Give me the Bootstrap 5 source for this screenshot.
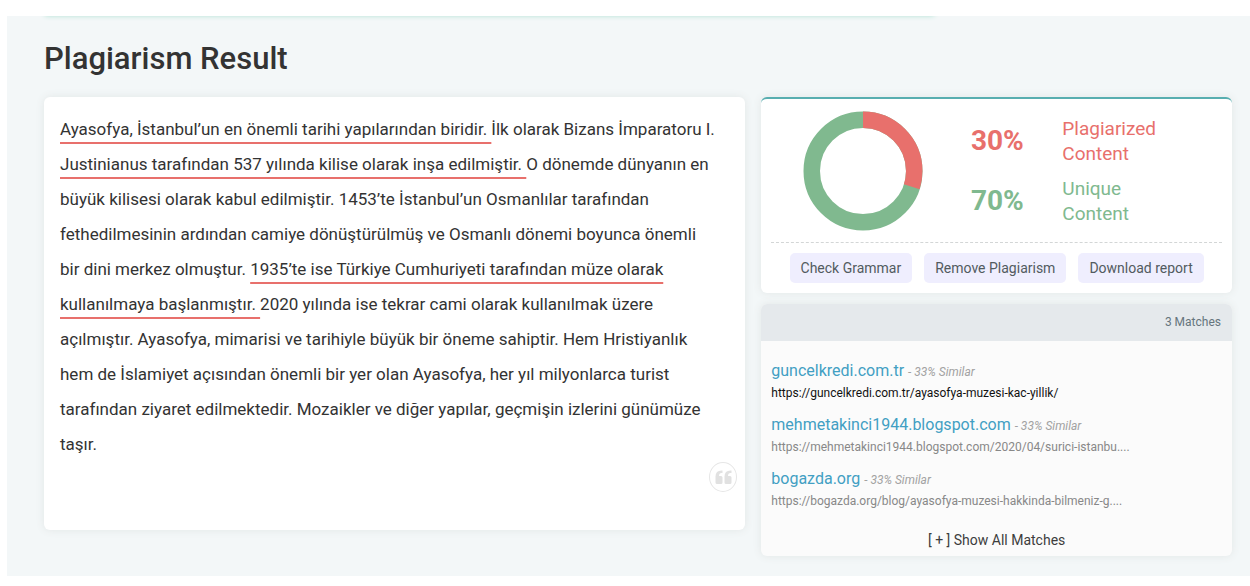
<!DOCTYPE html>
<html lang="en">
<head>
<meta charset="utf-8">
<meta name="viewport" content="width=device-width, initial-scale=1">
<title>Plagiarism Result</title>
<link href="https://cdn.jsdelivr.net/npm/bootstrap@5.3.0/dist/css/bootstrap.min.css" rel="stylesheet">
<style>
body{font-family:Roboto,"Liberation Sans",sans-serif;color:#333;background:#fff}
.page-panel{background:#f3f7f8;margin:16px 0 10px 7px;padding:0 18px 20px 37px;overflow:hidden}
.panel-edge{height:8px;margin:-9px 25% 0 0;border-radius:6px;box-shadow:0 1px 5px #b4e3d5}
.result-title{font-size:31px;line-height:36px;font-weight:500;margin:26px 0 20px}
.result-grid{display:grid;grid-template-columns:minmax(0,1fr);gap:16px;align-items:start}
@media(min-width:992px){.result-grid{grid-template-columns:minmax(0,1.49fr) minmax(0,1fr)}}
.soft-card{background:#fff;border-radius:6px;box-shadow:0 0 8px #e2e6e6}
.essay-card{padding:15px 8px 38px 16px}
.essay{font-size:17px;line-height:35px;margin:0;padding-right:20px}
.hit{text-decoration:underline;text-decoration-color:#e8706c;text-decoration-thickness:2px;text-underline-offset:7px;text-decoration-skip-ink:none}
.quote-btn{width:28px;height:30px;border:1px solid #e6e6e6;border-radius:50%;background:#fff}
.score-card{border-top:2px solid #58aeb0;padding:12px 10px 10px}
.chart-cell{width:184px}
.score-row{height:60px}
.score-pct{font-size:28px;font-weight:700;width:84px;margin-right:23px;line-height:36px}
.score-label{font-size:19px;line-height:25px;width:100px}
.c-red{color:#e8706c}.c-green{color:#80b98f}
.score-actions{border-top:1px dashed #d3d6d6;margin-top:11px;padding-top:10px;gap:12px}
.act-btn{background:#efeefe;color:#525b60;border:0;border-radius:5px;font-size:14px;line-height:20px;padding:5px 11px}
.act-btn:hover{background:#e2e0fb}
.matches-card{background:#fbfbfb;overflow:hidden;margin-top:11px}
.matches-head{background:#e5e9ec;color:#66757d;font-size:12px;line-height:37px;padding:0 11px}
.matches-body{padding:18px 10px 0}
.match-item{margin-bottom:10px}
.match-site{color:#429fc3;font-size:16px;line-height:24px;text-decoration:none}
.match-sim{color:#a2a2a2;font-size:12px}
.match-url{font-size:12px;line-height:20px;color:#888;text-decoration:none}
.match-url.current{color:#111}
.show-all{border:0;background:none;color:#3d3d3d;font-size:14px;line-height:20px;padding:0;margin:9px 0 6px}
</style>
</head>
<body>
<main class="page-panel">
  <div class="panel-edge"></div>
  <h1 class="result-title">Plagiarism Result</h1>
  <div class="result-grid">
    <section class="soft-card essay-card">
      <p class="essay"><span class="hit">Ayasofya, İstanbul’un en önemli tarihi yapılarından biridir. </span>İlk olarak Bizans İmparatoru I. <span class="hit">Justinianus tarafından 537 yılında kilise olarak inşa edilmiştir. </span>O dönemde dünyanın en büyük kilisesi olarak kabul edilmiştir. 1453’te İstanbul’un Osmanlılar tarafından fethedilmesinin ardından camiye dönüştürülmüş ve Osmanlı dönemi boyunca önemli bir dini merkez olmuştur. <span class="hit">1935’te ise Türkiye Cumhuriyeti tarafından müze olarak kullanılmaya başlanmıştır. </span>2020 yılında ise tekrar cami olarak kullanılmak üzere açılmıştır. Ayasofya, mimarisi ve tarihiyle büyük bir öneme sahiptir. Hem Hristiyanlık hem de İslamiyet açısından önemli bir yer olan Ayasofya, her yıl milyonlarca turist tarafından ziyaret edilmektedir. Mozaikler ve diğer yapılar, geçmişin izlerini günümüze taşır.</p>
      <div class="d-flex justify-content-end">
        <button class="quote-btn d-flex align-items-center justify-content-center p-0" type="button" aria-label="Cite">
          <svg width="17" height="15" viewBox="0 0 17 15" fill="#e1e1e1"><path id="q" d="M7.5 0.5V3H6.5Q4 3 4 6H6Q7.500 6 7.500 7.500V12.500Q7.500 14 6 14H2Q.5 14 .5 12.500V6.500Q.5.5 6.500.5Z"/><use href="#q" x="9"/></svg>
        </button>
      </div>
    </section>
    <div>
      <section class="soft-card score-card">
        <div class="d-flex align-items-center">
          <div class="chart-cell text-center">
            <svg class="d-block mx-auto" width="120" height="120" viewBox="0 0 120 120" fill="none" stroke-width="16.500" role="img" aria-label="30% plagiarized, 70% unique">
              <circle cx="60" cy="60" r="51.250" stroke="#80b98f"/>
              <circle cx="60" cy="60" r="51.250" stroke="#e8706c" pathLength="100" stroke-dasharray="30 70" transform="rotate(-90 60 60)"/>
            </svg>
          </div>
          <div class="d-flex flex-column">
            <div class="score-row d-flex align-items-center c-red"><div class="score-pct text-center">30%</div><div class="score-label">Plagiarized Content</div></div>
            <div class="score-row d-flex align-items-center c-green"><div class="score-pct text-center">70%</div><div class="score-label">Unique Content</div></div>
          </div>
        </div>
        <div class="score-actions d-flex flex-wrap justify-content-center">
          <button class="act-btn" type="button">Check Grammar</button>
          <button class="act-btn" type="button">Remove Plagiarism</button>
          <button class="act-btn" type="button">Download report</button>
        </div>
      </section>
      <section class="soft-card matches-card">
        <div class="matches-head text-end">3 Matches</div>
        <div class="matches-body">
          <div class="match-item"><div><a class="match-site" href="#">guncelkredi.com.tr</a> <em class="match-sim">- 33% Similar</em></div><a class="match-url current d-block" href="#">https://guncelkredi.com.tr/ayasofya-muzesi-kac-yillik/</a></div>
          <div class="match-item"><div><a class="match-site" href="#">mehmetakinci1944.blogspot.com</a> <em class="match-sim">- 33% Similar</em></div><a class="match-url d-block" href="#">https://mehmetakinci1944.blogspot.com/2020/04/surici-istanbu....</a></div>
          <div class="match-item"><div><a class="match-site" href="#">bogazda.org</a> <em class="match-sim">- 33% Similar</em></div><a class="match-url d-block" href="#">https://bogazda.org/blog/ayasofya-muzesi-hakkinda-bilmeniz-g....</a></div>
          <div class="text-center"><button class="show-all" type="button">[ + ] Show All Matches</button></div>
        </div>
      </section>
    </div>
  </div>
</main>
<script src="https://cdn.jsdelivr.net/npm/bootstrap@5.3.0/dist/js/bootstrap.bundle.min.js"></script>
</body>
</html>
